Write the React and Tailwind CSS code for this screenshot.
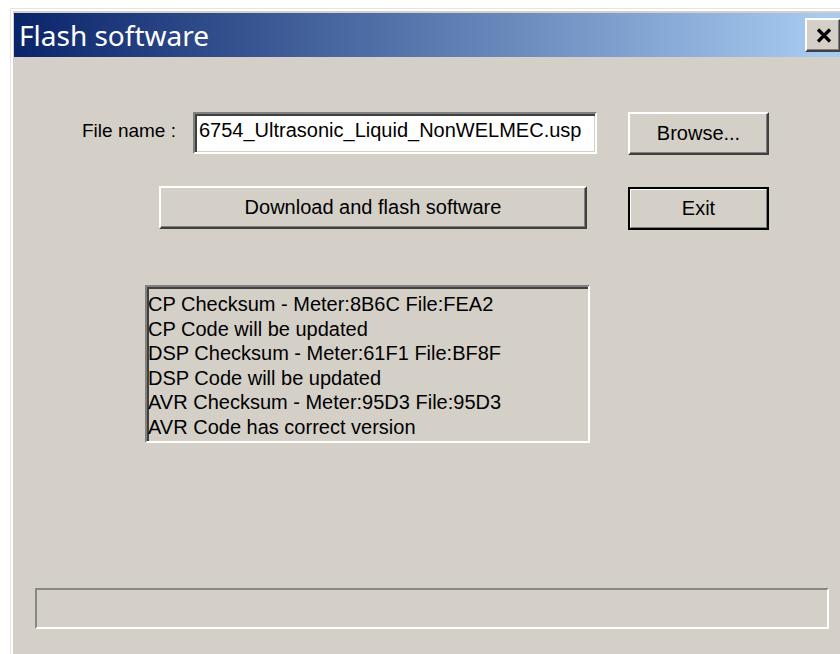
export default function App() {
  const lines = [
    "CP Checksum - Meter:8B6C File:FEA2",
    "CP Code will be updated",
    "DSP Checksum - Meter:61F1 File:BF8F",
    "DSP Code will be updated",
    "AVR Checksum - Meter:95D3 File:95D3",
    "AVR Code has correct version",
  ];

  const raised =
    "bg-[#d4d0c8] border-2 border-t-white border-l-white border-r-[#404040] border-b-[#404040] shadow-[inset_-1px_-1px_0_#808080]";
  const sunken =
    "border-2 border-t-[#808080] border-l-[#808080] border-r-white border-b-white shadow-[inset_2px_2px_0_#404040,inset_-1px_-1px_0_#d4d0c8]";

  return (
    <div className="w-[840px] h-[654px] bg-white overflow-hidden font-['Liberation_Sans',Arial,sans-serif] text-black">
      {/* dialog window */}
      <div className="ml-[10px] mt-[8px] w-[846px] h-[660px] bg-[#d4d0c8] border-t border-l border-[#e6e4df] shadow-[inset_2px_2px_0_#ffffff] pl-[3px] pt-[4px]">
        {/* caption bar */}
        <div className="h-[44px] flex items-center bg-[linear-gradient(to_right,#0a246a,#a6caf0_96%)]">
          <div className="flex-1 pl-[5px] text-white text-[28px] leading-[28px] font-['Noto_Sans',sans-serif]">
            Flash software
          </div>
          <div className={`w-[36px] h-[34px] mr-[15px] flex items-center justify-center ${raised}`}>
            <svg width="16" height="15" viewBox="0 0 16 15" className="ml-[2px]">
              <path d="M2 1.5 L14 13.5 M14 1.5 L2 13.5" stroke="#000" strokeWidth="3.2" />
            </svg>
          </div>
        </div>

        {/* file name row */}
        <div className="flex items-start mt-[55px] pl-[68px]">
          <div className="w-[111px] mt-[7px] text-[19px] leading-[23px]">File name :</div>
          <div className={`w-[404px] h-[42px] bg-white pl-[4px] pt-[5px] text-[20px] leading-[23px] whitespace-nowrap overflow-hidden ${sunken}`}>
            6754_Ultrasonic_Liquid_NonWELMEC.usp
          </div>
          <div className={`ml-[31px] w-[141px] h-[43px] flex items-center justify-center text-[20px] leading-[23px] ${raised}`}>
            Browse...
          </div>
        </div>

        {/* action row */}
        <div className="flex items-start mt-[31px] pl-[145px]">
          <div className={`w-[428px] h-[43px] flex items-center justify-center text-[20px] leading-[23px] ${raised}`}>
            Download and flash software
          </div>
          <div className="ml-[41px] mt-[1px] w-[141px] h-[43px] border-2 border-black">
            <div className="w-full h-full bg-[#d4d0c8] border border-t-white border-l-white border-r-[#808080] border-b-[#808080] flex items-center justify-center text-[20px] leading-[23px]">
              Exit
            </div>
          </div>
        </div>

        {/* status list */}
        <div className={`ml-[131px] mt-[55px] w-[445px] h-[158px] bg-[#d4d0c8] pt-[5px] pl-[1px] text-[20px] leading-[24.5px] whitespace-nowrap overflow-hidden ${sunken}`}>
          {lines.map((l) => (
            <div key={l}>{l}</div>
          ))}
        </div>

        {/* progress bar */}
        <div className="ml-[21px] mt-[145px] w-[794px] h-[41px] bg-[#d4d0c8] border-2 border-t-[#8a8884] border-l-[#8a8884] border-r-white border-b-white"></div>
      </div>
    </div>
  );
}
